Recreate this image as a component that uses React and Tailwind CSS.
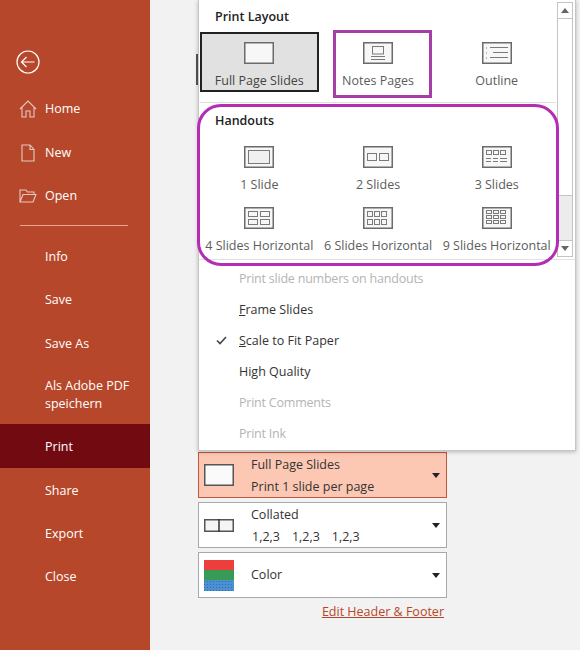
import React from "react";

const FONT = "font-['Open_Sans',sans-serif]";

// Small page thumbnail used by the print layout gallery
function PageIcon({ children }) {
  return (
    <svg width="30" height="22" viewBox="0 0 30 22" fill="none" className="block">
      <rect x="0.75" y="0.75" width="28.5" height="20.5" fill="#f7f7f7" stroke="#6b6b6b" strokeWidth="1.5" />
      <g stroke="#7a7a7a" strokeWidth="1">{children}</g>
    </svg>
  );
}

function Boxes({ cols, rows, w, h, x0, y0, gapX, gapY }) {
  const out = [];
  for (let r = 0; r < rows; r++) {
    for (let c = 0; c < cols; c++) {
      out.push(<rect key={`${r}-${c}`} x={x0 + c * (w + gapX)} y={y0 + r * (h + gapY)} width={w} height={h} />);
    }
  }
  return <>{out}</>;
}

const icons = {
  full: null,
  notes: (
    <>
      <rect x="9.5" y="4.5" width="11" height="7.5" />
      <path d="M8 14.5h14M8 17.5h14" />
    </>
  ),
  outline: (
    <>
      <path d="M4 6h2M4 11h2M4 16h2" strokeDasharray="1 1" />
      <path d="M8 5.5h18M11 10.5h15M8 15.5h18" />
    </>
  ),
  one: <rect x="4.5" y="4.5" width="21" height="13" fill="#f0f0f0" />,
  two: <Boxes cols={2} rows={1} w={9} h={7} x0={4.5} y0={7.5} gapX={3} gapY={0} />,
  three: (
    <>
      <Boxes cols={3} rows={1} w={5} h={4} x0={4.5} y0={4.5} gapX={2} gapY={0} />
      <path d="M4 12.5h5M11 12.5h5M18 12.5h7M4 15.5h5M11 15.5h5M18 15.5h7" />
    </>
  ),
  four: <Boxes cols={2} rows={2} w={9} h={5} x0={4.5} y0={4.5} gapX={3} gapY={3} />,
  six: <Boxes cols={3} rows={2} w={5} h={5} x0={4.5} y0={4.5} gapX={2} gapY={3} />,
  nine: <Boxes cols={3} rows={3} w={5} h={3} x0={4.5} y0={3.5} gapX={2} gapY={2} />,
};

function GalleryItem({ icon, label, selected }) {
  return (
    <div
      className={`flex flex-col items-center ${selected ? "h-[60px] border-2 border-[#222] bg-[#e1e1e1] pt-[8px]" : "h-[60px] pt-[10px]"}`}
    >
      <PageIcon>{icons[icon]}</PageIcon>
      <span className={`mt-[8px] whitespace-nowrap text-[12.5px] leading-[18px] text-[#5c5c5c] ${selected ? "text-[#444]" : ""}`}>
        {label}
      </span>
    </div>
  );
}

function MenuRow({ children, disabled, checked }) {
  return (
    <div className={`relative flex h-[31px] items-center pl-[40px] text-[12.5px] ${disabled ? "tracking-[-0.22px] text-[#b4b4b4]" : "text-[#333]"}`}>
      {checked && (
        <svg width="11" height="9" viewBox="0 0 11 9" fill="none" className="absolute left-[17px] top-[10px]">
          <path d="M1 4.5 4 7.5 10 1" stroke="#444" strokeWidth="1.6" />
        </svg>
      )}
      {children}
    </div>
  );
}

function Scrollbar() {
  return (
    <div className="ml-[1px] mt-[2px] flex h-[255px] w-[16px] flex-col border border-[#c4c4c4] bg-white">
      <div className="flex h-[16px] items-center justify-center border-b border-[#c4c4c4]">
        <div className="h-0 w-0 border-x-[4.5px] border-b-[5px] border-x-transparent border-b-[#666]" />
      </div>
      <div className="h-[177px] border-b border-[#c4c4c4]" />
      <div className="flex-1 bg-[#ececec]" />
      <div className="flex h-[16px] items-center justify-center border-t border-[#c4c4c4] bg-white">
        <div className="h-0 w-0 border-x-[4.5px] border-t-[5px] border-x-transparent border-t-[#666]" />
      </div>
    </div>
  );
}

function PrintMenu() {
  return (
    <div className="relative h-[451px] w-[378px] border-x border-b border-[#c6c6c6] bg-white shadow-[0_1px_4px_rgba(0,0,0,0.25)]">
      <div className="flex h-[260px] border-b border-[#e2e2e2] pr-[2px]">
        <div className="w-[357px] pl-[1px]">
          <div className="flex h-[32px] items-center pl-[15px] pt-[2px] text-[12.5px] font-semibold text-[#222]">Print Layout</div>
          <div className="grid grid-cols-[repeat(3,118.7px)]">
            <GalleryItem icon="full" label="Full Page Slides" selected />
            <GalleryItem icon="notes" label="Notes Pages" />
            <GalleryItem icon="outline" label="Outline" />
          </div>
          <div className="mt-[10px] border-t border-[#e2e2e2]" />
          <div className="flex h-[33px] items-center pl-[15px] pt-[4px] text-[12.5px] font-semibold text-[#222]">Handouts</div>
          <div className="grid grid-cols-[repeat(3,118.7px)] gap-y-[1px]">
            <GalleryItem icon="one" label="1 Slide" />
            <GalleryItem icon="two" label="2 Slides" />
            <GalleryItem icon="three" label="3 Slides" />
            <GalleryItem icon="four" label="4 Slides Horizontal" />
            <GalleryItem icon="six" label="6 Slides Horizontal" />
            <GalleryItem icon="nine" label="9 Slides Horizontal" />
          </div>
        </div>
        <Scrollbar />
      </div>
      <div className="pt-[4px]">
        <MenuRow disabled>Print slide numbers on handouts</MenuRow>
        <MenuRow><span><span className="underline">F</span>rame Slides</span></MenuRow>
        <MenuRow checked><span><span className="underline">S</span>cale to Fit Paper</span></MenuRow>
        <MenuRow>High Quality</MenuRow>
        <MenuRow disabled>Print Comments</MenuRow>
        <MenuRow disabled>Print Ink</MenuRow>
      </div>
      {/* purple annotations drawn over the menu */}
      <div className="pointer-events-none absolute left-[134px] top-[30px] h-[68px] w-[99px] border-[3px] border-[#a53ea5]" />
      <div className="pointer-events-none absolute left-[-2px] top-[104px] h-[162px] w-[362px] rounded-[24px] border-[3px] border-[#b32db5]" />
    </div>
  );
}

function SettingRow({ icon, children, active }) {
  return (
    <div
      className={`flex h-[46px] items-center border ${active ? "border-[#c0583c] bg-[#fcc8b4]" : "border-[#a9a9a9] bg-white"}`}
    >
      <div className="flex w-[52px] shrink-0 justify-start pl-[5px]">{icon}</div>
      <div className="flex-1 text-[12.5px] leading-[22px] text-[#333]">{children}</div>
      <div className="mr-[6px] h-0 w-0 border-x-[4.5px] border-t-[5px] border-x-transparent border-t-[#222]" />
    </div>
  );
}

function SettingsList() {
  return (
    <div className="flex w-[249px] flex-col gap-[4px] pt-[1px]">
      <SettingRow
        active
        icon={
          <svg width="30" height="22" viewBox="0 0 30 22" fill="none">
            <rect x="0.75" y="0.75" width="28.5" height="20.5" fill="#fafafa" stroke="#555" strokeWidth="1.5" />
          </svg>
        }
      >
        <div className="pt-[2px]">
          <div>Full Page Slides</div>
          <div>Print 1 slide per page</div>
        </div>
      </SettingRow>
      <SettingRow
        icon={
          <svg width="30" height="13" viewBox="0 0 30 13" fill="none">
            <rect x="0.75" y="0.75" width="28.5" height="11.5" fill="#f4f4f4" stroke="#555" strokeWidth="1.5" />
            <path d="M15 0v13" stroke="#333" strokeWidth="1.5" />
          </svg>
        }
      >
        <div className="pt-[2px]">
          <div>Collated</div>
          <div className="flex gap-[12px] pl-[1px]">
            <span>1,2,3</span>
            <span>1,2,3</span>
            <span>1,2,3</span>
          </div>
        </div>
      </SettingRow>
      <SettingRow
        icon={
          <svg width="30" height="31" viewBox="0 0 30 31">
            <defs>
              <pattern id="colorDots" width="3" height="3" patternUnits="userSpaceOnUse">
                <rect width="1" height="1" fill="#2f6fb0" />
              </pattern>
            </defs>
            <rect width="30" height="10" fill="#ec3f3d" />
            <rect y="10" width="30" height="10" fill="#379b55" />
            <rect y="20" width="30" height="11" fill="#4a90d2" />
            <rect y="20" width="30" height="11" fill="url(#colorDots)" />
          </svg>
        }
      >
        Color
      </SettingRow>
      <div className="mt-[1px] pr-[3px] text-right text-[12.5px] leading-[18px] text-[#b7472a] underline">
        Edit Header &amp; Footer
      </div>
    </div>
  );
}

function NavItem({ icon, children, active, className = "h-[43.5px]" }) {
  return (
    <div className={`flex items-center pl-[45px] ${className} relative ${active ? "bg-[#720b11]" : ""}`}>
      {icon && <span className="absolute left-[19px] top-1/2 -translate-y-1/2">{icon}</span>}
      <span className="text-[12.5px] leading-[18px] text-white">{children}</span>
    </div>
  );
}

function Sidebar() {
  return (
    <div className="w-[150px] shrink-0 bg-[#b7472a] pt-[40px]">
      <div className="mb-[3.5px] flex h-[44px] items-center pl-[16px]">
        <svg width="24" height="24" viewBox="0 0 24 24" fill="none" stroke="#fff" strokeWidth="1.2">
          <circle cx="12" cy="12" r="11" />
          <path d="M18.5 12H5.5M10.5 7l-5 5 5 5" />
        </svg>
      </div>
      <NavItem
        icon={
          <svg width="18" height="18" viewBox="0 0 18 18" fill="none" stroke="#e3c9c2" strokeWidth="1.1" className="block">
            <path d="M1 9 9 1l8 8M3 7.5V17h4v-6h4v6h4V7.5" />
          </svg>
        }
      >
        Home
      </NavItem>
      <NavItem
        icon={
          <svg width="18" height="18" viewBox="0 0 18 18" fill="none" stroke="#e3c9c2" strokeWidth="1.1" className="block">
            <path d="M3 1h8l4 4.5V17H3zM11 1v4.5h4" />
          </svg>
        }
      >
        New
      </NavItem>
      <NavItem
        icon={
          <svg width="18" height="16" viewBox="0 0 18 16" fill="none" stroke="#e3c9c2" strokeWidth="1.1" className="block">
            <path d="M1 14V2h6l1.5 2H15v2.5M1 14l3-7.5h13L14 14z" />
          </svg>
        }
      >
        Open
      </NavItem>
      <div className="ml-[20px] mt-[7px] mb-[9px] w-[108px] border-t border-[#e5a58f]" />
      <NavItem>Info</NavItem>
      <NavItem>Save</NavItem>
      <NavItem className="h-[43px]">Save As</NavItem>
      <NavItem className="h-[59px]">
        Als Adobe PDF
        <br />
        speichern
      </NavItem>
      <NavItem active className="h-[44px] pt-[2px]">Print</NavItem>
      <NavItem className="h-[43.5px] pt-[2px]">Share</NavItem>
      <NavItem className="h-[43.5px] pt-[2px]">Export</NavItem>
      <NavItem>Close</NavItem>
    </div>
  );
}

export default function App() {
  return (
    <div className={`flex h-[650px] w-[580px] overflow-hidden bg-[#f2f2f2] ${FONT}`}>
      <Sidebar />
      <div className="relative flex-1 pl-[48px]">
        <div className="absolute left-[46px] top-[54px] h-[31px] w-[2px] bg-[#555]" />
        <PrintMenu />
        <SettingsList />
      </div>
    </div>
  );
}
